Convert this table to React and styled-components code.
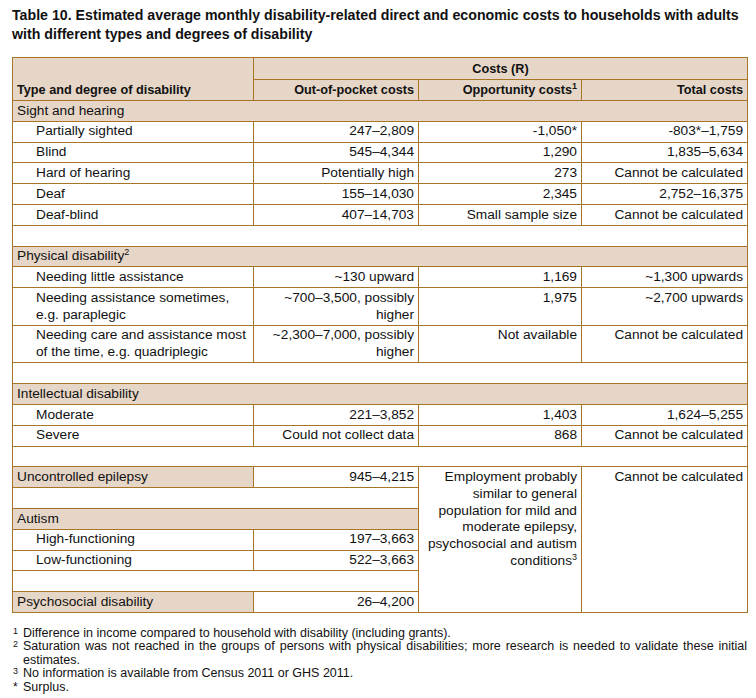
import React from 'react';
import styled, { createGlobalStyle } from 'styled-components';

const GlobalStyle = createGlobalStyle`
  body {
    margin: 0;
    background: #ffffff;
    font-family: "Liberation Sans", Arial, sans-serif;
    color: #111111;
  }
`;

const BORDER = '#a87426';
const SHADE = '#e6d6c7';

const StPage = styled.div`
  padding: 6px 10px 0 12px;
  width: 734px;
`;

const StTitle = styled.h1`
  margin: 0 0 13px;
  font-size: 14.2px;
  line-height: 19px;
  font-weight: bold;
  white-space: nowrap;
  color: #111;
`;

const StTable = styled.table`
  width: 735px;
  border-collapse: collapse;
  table-layout: fixed;
  border: 1px solid ${BORDER};
  font-size: 13.7px;
  line-height: 16.8px;
`;

const StHead = styled.th`
  border: 1px solid ${BORDER};
  background: ${SHADE};
  font-size: 12.7px;
  font-weight: bold;
  padding: ${({ $tall }) => ($tall ? '2.5px 4px 2px' : '1.5px 4px')};
  text-align: ${({ $align }) => $align || 'right'};
  vertical-align: ${({ $valign }) => $valign || 'middle'};
`;

const StCell = styled.td`
  border: 1px solid ${BORDER};
  background: ${({ $shade }) => ($shade ? SHADE : '#ffffff')};
  padding: 1.5px 4px 1.5px ${({ $indent }) => ($indent ? '23px' : '4px')};
  text-align: ${({ $align }) => $align || 'left'};
  vertical-align: ${({ $top }) => ($top ? 'top' : 'middle')};
  white-space: ${({ $indent }) => ($indent ? 'nowrap' : 'normal')};
  font-weight: normal;
  height: ${({ $blank }) => ($blank ? '16.8px' : 'auto')};
`;

const StSup = styled.sup`
  font-size: 9px;
  line-height: 0;
  vertical-align: 5px;
`;

const StNotes = styled.div`
  margin-top: 14px;
  font-size: 12.5px;
  line-height: 13.4px;
  width: 735px;
`;

const StNote = styled.div`
  display: grid;
  grid-template-columns: 11px 1fr;
`;

const StMark = styled.span`
  font-size: ${({ $star }) => ($star ? '12px' : '9px')};
  line-height: ${({ $star }) => ($star ? '13.4px' : '8px')};
  padding-left: 1px;
`;

const StJustified = styled.span`
  display: block;
  text-align: justify;
  text-align-last: justify;
`;

const groups = [
  {
    name: 'Sight and hearing',
    rows: [
      ['Partially sighted', '247–2,809', '-1,050*', '-803*–1,759'],
      ['Blind', '545–4,344', '1,290', '1,835–5,634'],
      ['Hard of hearing', 'Potentially high', '273', 'Cannot be calculated'],
      ['Deaf', '155–14,030', '2,345', '2,752–16,375'],
      ['Deaf-blind', '407–14,703', 'Small sample size', 'Cannot be calculated'],
    ],
  },
  {
    name: 'Physical disability',
    sup: '2',
    rows: [
      ['Needing little assistance', '~130 upward', '1,169', '~1,300 upwards'],
      [
        <>Needing assistance sometimes,<br />e.g. paraplegic</>,
        <>~700–3,500, possibly<br />higher</>,
        '1,975',
        '~2,700 upwards',
      ],
      [
        <>Needing care and assistance most<br />of the time, e.g. quadriplegic</>,
        <>~2,300–7,000, possibly<br />higher</>,
        'Not available',
        'Cannot be calculated',
      ],
    ],
  },
  {
    name: 'Intellectual disability',
    rows: [
      ['Moderate', '221–3,852', '1,403', '1,624–5,255'],
      ['Severe', 'Could not collect data', '868', 'Cannot be calculated'],
    ],
  },
];

const BlankRow = ({ span = 4 }) => (
  <tr>
    <StCell colSpan={span} $blank />
  </tr>
);

const GroupRows = ({ group }) => (
  <>
    <tr>
      <StCell colSpan={4} $shade>
        {group.name}
        {group.sup && <StSup>{group.sup}</StSup>}
      </StCell>
    </tr>
    {group.rows.map((row, i) => (
      <tr key={i}>
        <StCell $indent $top>{row[0]}</StCell>
        <StCell $align="right" $top>{row[1]}</StCell>
        <StCell $align="right" $top>{row[2]}</StCell>
        <StCell $align="right" $top>{row[3]}</StCell>
      </tr>
    ))}
  </>
);

const App = () => {
  return (
    <StPage>
      <GlobalStyle />
      <StTitle>
        Table 10. Estimated average monthly disability-related direct and economic costs to households with adults
        <br />
        with different types and degrees of disability
      </StTitle>
      <StTable>
        <colgroup>
          <col style={{ width: 241 }} />
          <col style={{ width: 165 }} />
          <col style={{ width: 163 }} />
          <col style={{ width: 166 }} />
        </colgroup>
        <thead>
          <tr>
            <StHead rowSpan={2} $align="left" $valign="bottom">
              Type and degree of disability
            </StHead>
            <StHead colSpan={3} $align="center" $tall>
              Costs (R)
            </StHead>
          </tr>
          <tr>
            <StHead>Out-of-pocket costs</StHead>
            <StHead>
              Opportunity costs<StSup>1</StSup>
            </StHead>
            <StHead>Total costs</StHead>
          </tr>
        </thead>
        <tbody>
          <GroupRows group={groups[0]} />
          <BlankRow />
          <GroupRows group={groups[1]} />
          <BlankRow />
          <GroupRows group={groups[2]} />
          <BlankRow />
          <tr>
            <StCell $shade>Uncontrolled epilepsy</StCell>
            <StCell $align="right">945–4,215</StCell>
            <StCell rowSpan={7} $align="right" $top>
              Employment probably
              <br />
              similar to general
              <br />
              population for mild and
              <br />
              moderate epilepsy,
              <br />
              psychosocial and autism
              <br />
              conditions<StSup>3</StSup>
            </StCell>
            <StCell rowSpan={7} $align="right" $top>
              Cannot be calculated
            </StCell>
          </tr>
          <BlankRow span={2} />
          <tr>
            <StCell colSpan={2} $shade>Autism</StCell>
          </tr>
          <tr>
            <StCell $indent>High-functioning</StCell>
            <StCell $align="right">197–3,663</StCell>
          </tr>
          <tr>
            <StCell $indent>Low-functioning</StCell>
            <StCell $align="right">522–3,663</StCell>
          </tr>
          <BlankRow span={2} />
          <tr>
            <StCell $shade>Psychosocial disability</StCell>
            <StCell $align="right">26–4,200</StCell>
          </tr>
        </tbody>
      </StTable>
      <StNotes>
        <StNote>
          <StMark>1</StMark>
          <span>Difference in income compared to household with disability (including grants).</span>
        </StNote>
        <StNote>
          <StMark>2</StMark>
          <span>
            <StJustified>
              Saturation was not reached in the groups of persons with physical disabilities; more research is needed to validate these initial
            </StJustified>
            estimates.
          </span>
        </StNote>
        <StNote>
          <StMark>3</StMark>
          <span>No information is available from Census 2011 or GHS 2011.</span>
        </StNote>
        <StNote>
          <StMark $star>*</StMark>
          <span>Surplus.</span>
        </StNote>
      </StNotes>
    </StPage>
  );
};

export default App;
